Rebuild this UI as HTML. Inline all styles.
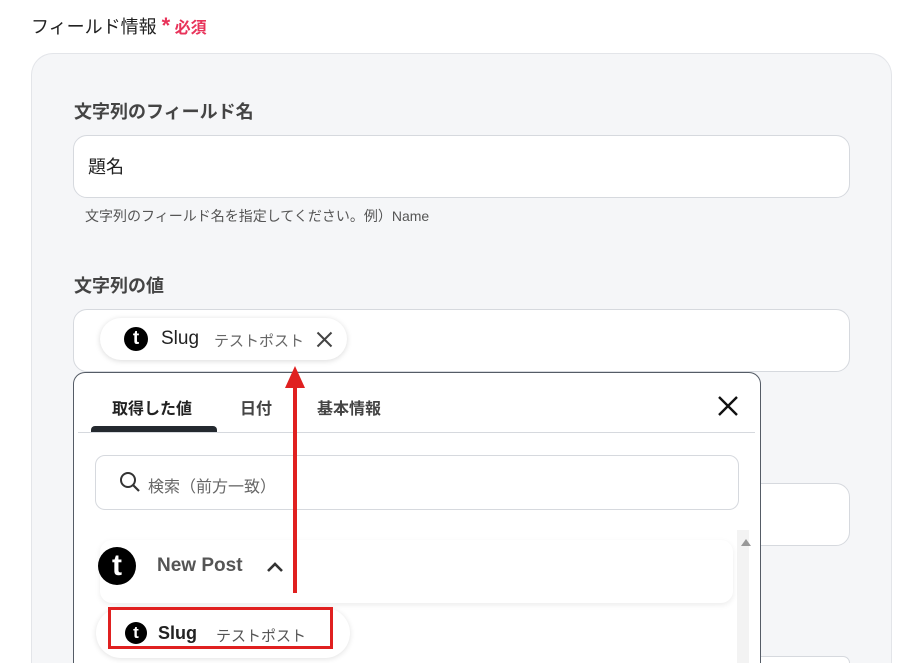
<!DOCTYPE html>
<html style="overflow:hidden;height:663px"><head><meta charset="utf-8"><style>
*{box-sizing:border-box;margin:0;padding:0}
body{width:912px;height:663px;overflow:hidden;background:#fff;font-family:"Liberation Sans","Noto Sans CJK JP",sans-serif;color:#333;position:relative}
.abs{position:absolute}
.panel{left:31px;top:53px;width:861px;height:610px;background:#f5f6f8;border:1px solid #e3e5e9;border-bottom:none;border-radius:22px 22px 0 0}
.lbl{font-size:18px;font-weight:bold;color:#444}
.inp{background:#fff;border:1px solid #d6d9de;border-radius:14px}
.tl{display:inline-block;border-radius:50%;background:#000;color:#fff;font-weight:bold;text-align:center;font-family:"Liberation Sans",sans-serif}
</style></head><body>
<div class="abs" style="left:31px;top:13px;font-size:18px;color:#222">フィールド情報 <span style="color:#e8335a;font-size:16px;font-weight:bold"><span style="font-size:22px">*</span> 必須</span></div>
<div class="abs panel"></div>
<div class="abs lbl" style="left:74px;top:98px">文字列のフィールド名</div>
<div class="abs inp" style="left:73px;top:135px;width:777px;height:63px"></div>
<div class="abs" style="left:88px;top:153px;font-size:18px;color:#222">題名</div>
<div class="abs" style="left:85px;top:206px;font-size:14px;color:#555">文字列のフィールド名を指定してください。例）Name</div>
<div class="abs lbl" style="left:74px;top:272px">文字列の値</div>
<div class="abs inp" style="left:73px;top:309px;width:777px;height:63px"></div>
<div class="abs" style="left:100px;top:318px;width:247px;height:42px;background:#fff;border-radius:21px;box-shadow:0 1px 6px rgba(0,0,0,.15)"></div>
<div class="abs tl" style="left:124px;top:327px;width:24px;height:24px;font-size:19px;line-height:24px">t</div>
<div class="abs" style="left:161px;top:328px;font-size:19px;color:#222">Slug</div>
<div class="abs" style="left:214px;top:330px;font-size:15px;color:#666">テストポスト</div>
<svg class="abs" style="left:316px;top:331px" width="17" height="17"><path d="M1.5 1.5L15.5 15.5M15.5 1.5L1.5 15.5" stroke="#444" stroke-width="2"/></svg>
<div class="abs inp" style="left:73px;top:483px;width:777px;height:63px"></div>
<div class="abs inp" style="left:73px;top:656px;width:777px;height:7px;border-bottom:none;border-radius:14px 14px 0 0"></div>
<div class="abs" style="left:73px;top:372px;width:688px;height:291px;background:#fff;border:1px solid #555c66;border-bottom:none;border-radius:12px 12px 0 0"></div>
<div class="abs" style="left:78px;top:432px;width:677px;height:1px;background:#d6d9de"></div>
<div class="abs" style="left:91px;top:426px;width:126px;height:6px;background:#24292f;border-radius:4px 4px 0 0"></div>
<div class="abs" style="left:112px;top:395px;font-size:16px;font-weight:bold;color:#222">取得した値</div>
<div class="abs" style="left:240px;top:395px;font-size:16px;font-weight:bold;color:#444">日付</div>
<div class="abs" style="left:317px;top:395px;font-size:16px;font-weight:bold;color:#444">基本情報</div>
<svg class="abs" style="left:717px;top:395px" width="22" height="22"><path d="M2 2L20 20M20 2L2 20" stroke="#111" stroke-width="2.4"/></svg>
<div class="abs" style="left:95px;top:455px;width:644px;height:55px;border:1px solid #d6d9de;border-radius:10px"></div>
<svg class="abs" style="left:119px;top:471px" width="22" height="22"><circle cx="9" cy="9" r="7" fill="none" stroke="#333" stroke-width="2"/><path d="M14 14L20 20" stroke="#333" stroke-width="2.2"/></svg>
<div class="abs" style="left:148px;top:473px;font-size:16px;color:#666">検索（前方一致）</div>
<div class="abs" style="left:737px;top:530px;width:12px;height:133px;background:#f3f3f3"></div>
<div class="abs" style="left:741px;top:539px;width:0;height:0;border-left:5px solid transparent;border-right:5px solid transparent;border-bottom:7px solid #999"></div>
<div class="abs" style="left:100px;top:540px;width:633px;height:63px;background:#fff;border-radius:12px;box-shadow:0 2px 6px rgba(0,0,0,.08)"></div>
<div class="abs tl" style="left:98px;top:547px;width:38px;height:38px;font-size:30px;line-height:38px">t</div>
<div class="abs" style="left:157px;top:555px;font-size:19px;font-weight:bold;color:#555">New Post</div>
<svg class="abs" style="left:266px;top:560px" width="18" height="14"><path d="M2 11L9 4L16 11" fill="none" stroke="#333" stroke-width="2.6"/></svg>
<div class="abs" style="left:96px;top:608px;width:254px;height:50px;background:#fff;border-radius:25px;box-shadow:0 1px 6px rgba(0,0,0,.12)"></div>
<div class="abs" style="left:108px;top:607px;width:225px;height:42px;border:3px solid #e02020"></div>
<div class="abs tl" style="left:125px;top:622px;width:22px;height:22px;font-size:17px;line-height:22px">t</div>
<div class="abs" style="left:158px;top:623px;font-size:18px;font-weight:bold;color:#222">Slug</div>
<div class="abs" style="left:216px;top:625px;font-size:15px;color:#555">テストポスト</div>
<div class="abs" style="left:293px;top:385px;width:4px;height:208px;background:#e02020"></div>
<div class="abs" style="left:285px;top:366px;width:0;height:0;border-left:10px solid transparent;border-right:10px solid transparent;border-bottom:22px solid #e02020"></div>
</body></html>
